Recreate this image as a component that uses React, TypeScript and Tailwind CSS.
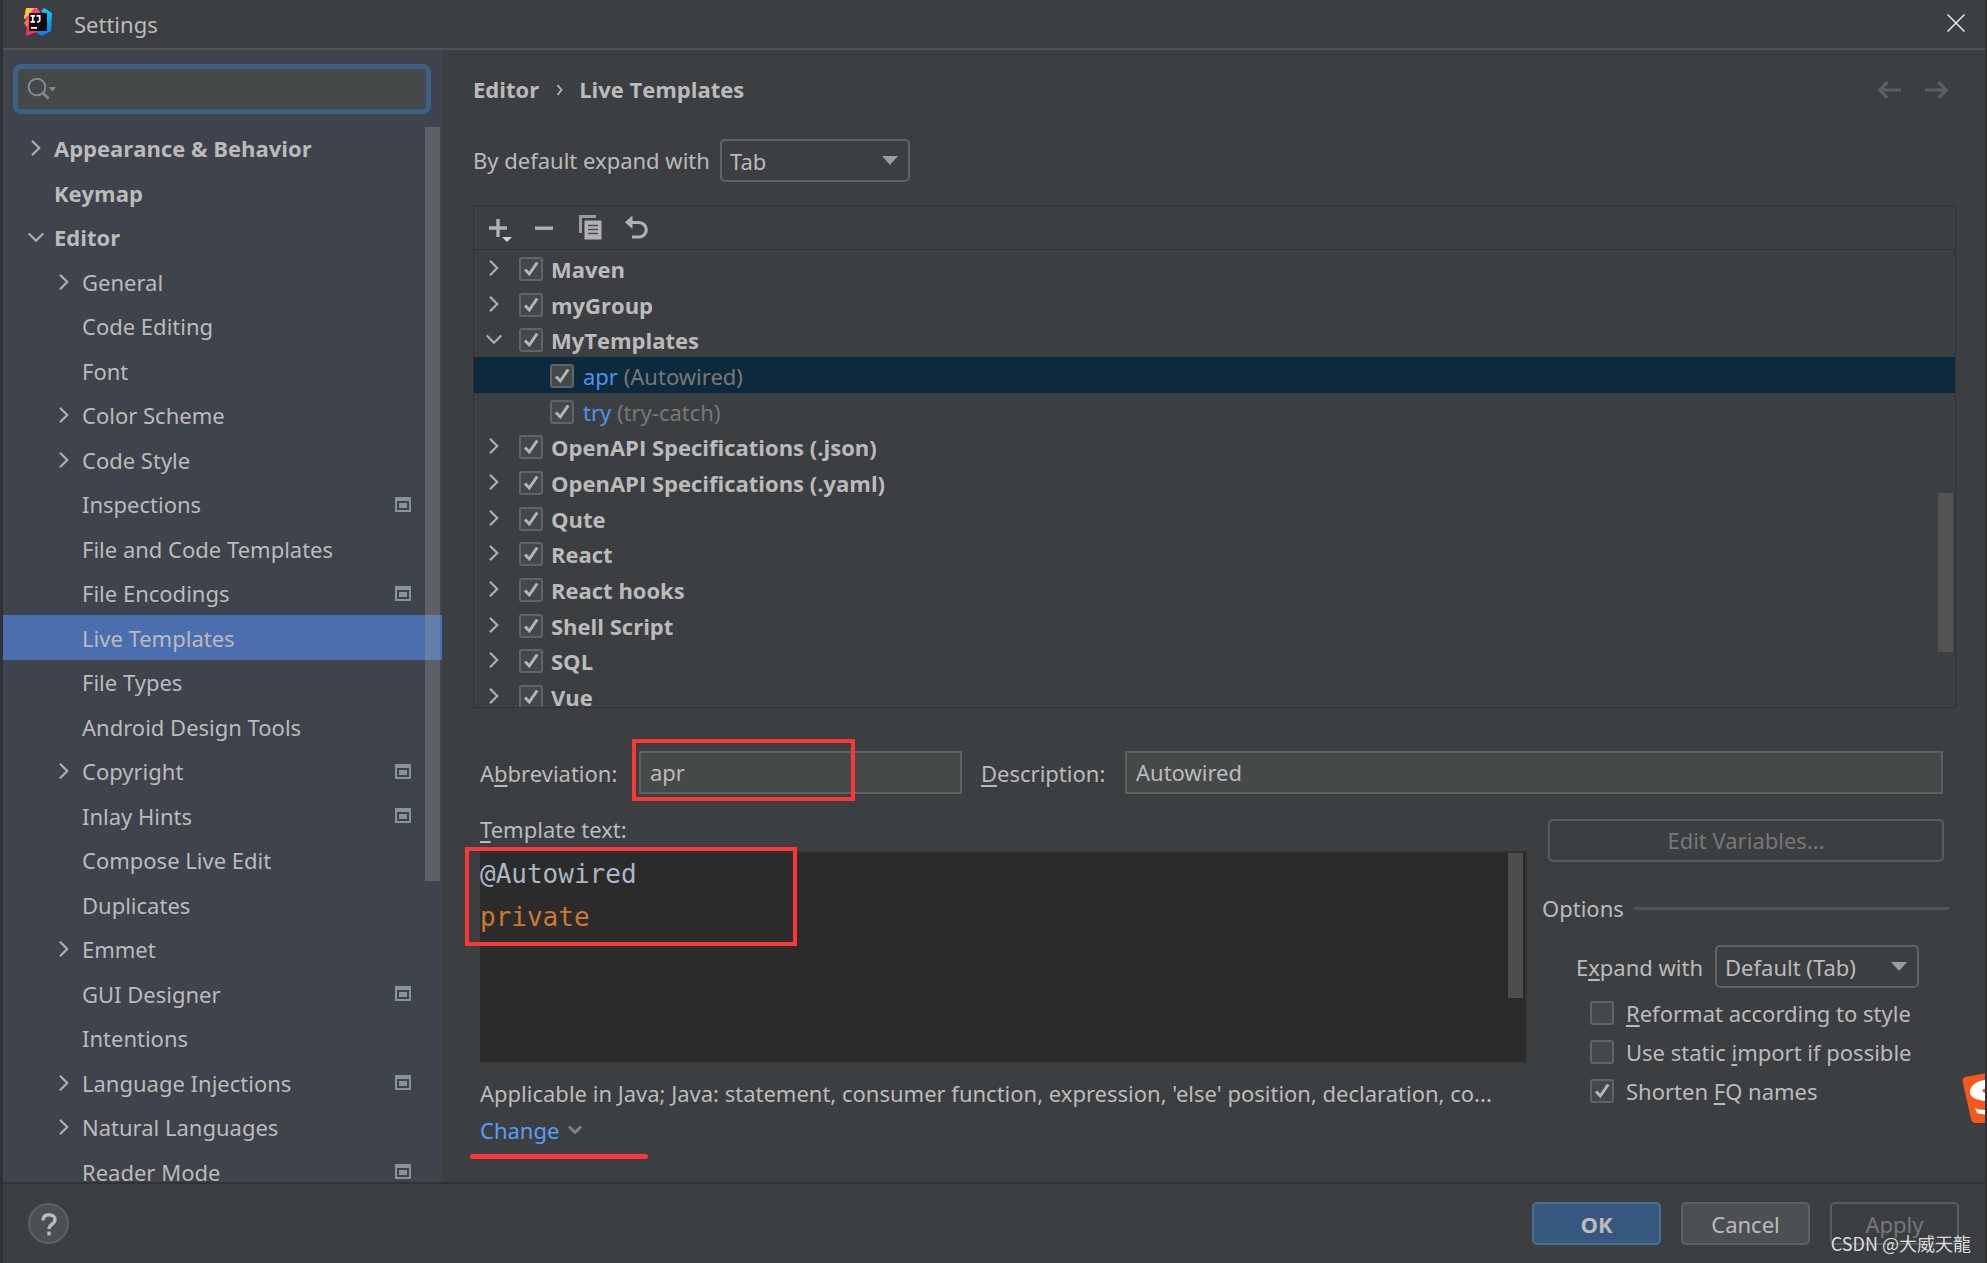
import { useState } from "react";

type NavItem = {
  label: string;
  level: number;
  state?: "open" | "closed";
  project?: boolean;
};

const navItems: NavItem[] = [
  { label: "Appearance & Behavior", level: 0, state: "closed" },
  { label: "Keymap", level: 0 },
  { label: "Editor", level: 0, state: "open" },
  { label: "General", level: 1, state: "closed" },
  { label: "Code Editing", level: 1 },
  { label: "Font", level: 1 },
  { label: "Color Scheme", level: 1, state: "closed" },
  { label: "Code Style", level: 1, state: "closed" },
  { label: "Inspections", level: 1, project: true },
  { label: "File and Code Templates", level: 1 },
  { label: "File Encodings", level: 1, project: true },
  { label: "Live Templates", level: 1 },
  { label: "File Types", level: 1 },
  { label: "Android Design Tools", level: 1 },
  { label: "Copyright", level: 1, state: "closed", project: true },
  { label: "Inlay Hints", level: 1, project: true },
  { label: "Compose Live Edit", level: 1 },
  { label: "Duplicates", level: 1 },
  { label: "Emmet", level: 1, state: "closed" },
  { label: "GUI Designer", level: 1, project: true },
  { label: "Intentions", level: 1 },
  { label: "Language Injections", level: 1, state: "closed", project: true },
  { label: "Natural Languages", level: 1, state: "closed" },
  { label: "Reader Mode", level: 1, project: true },
];

type TemplateRow = { name: string; description?: string; open?: boolean };

const templateRows: TemplateRow[] = [
  { name: "Maven" },
  { name: "myGroup" },
  { name: "MyTemplates", open: true },
  { name: "apr", description: "(Autowired)" },
  { name: "try", description: "(try-catch)" },
  { name: "OpenAPI Specifications (.json)" },
  { name: "OpenAPI Specifications (.yaml)" },
  { name: "Qute" },
  { name: "React" },
  { name: "React hooks" },
  { name: "Shell Script" },
  { name: "SQL" },
  { name: "Vue" },
];

function Chevron({ open }: { open?: boolean }) {
  return (
    <svg width="18" height="18" viewBox="0 0 18 18" fill="none" stroke="#adafb1" strokeWidth="2.2">
      {open ? <path d="M1.8 5.5 9 12.7l7.2-7.2" /> : <path d="M5 1.8 12.2 9 5 16.2" />}
    </svg>
  );
}

function ProjectIcon() {
  return (
    <svg width="16" height="15" viewBox="0 0 16 15" fill="none">
      <path d="M0 0h16v15H0z M2 4v9h12V4z" fill="#87939a" fillRule="evenodd" />
      <path d="M4 6h8v5H4z" fill="#87939a" />
    </svg>
  );
}

function IdeaLogo() {
  return (
    <svg width="30" height="30" viewBox="0 0 30 30">
      <defs>
        <linearGradient id="warm" x1="0" y1="0" x2="0.3" y2="1">
          <stop offset="0" stopColor="#fdd835" />
          <stop offset="0.5" stopColor="#fb7a4d" />
          <stop offset="0.8" stopColor="#fe2c6b" />
        </linearGradient>
        <linearGradient id="cool" x1="0" y1="0" x2="0" y2="1">
          <stop offset="0" stopColor="#13c9f5" />
          <stop offset="1" stopColor="#087cfa" />
        </linearGradient>
      </defs>
      <path d="M4 1 14 1 18 7 18 24 8 27 3 29 4 21 1 16 4 12 1 10z" fill="url(#warm)" />
      <path d="M10 1 15 2 18 7 8 10 4 14 1 11z" fill="#fe3d8b" />
      <path d="M3 1h8L6 8l-5 4z" fill="#fcc24a" />
      <path d="M18 4 21 1 29 6 28 24 19 29 13 25 23 22 23 8z" fill="url(#cool)" />
      <path d="M6 6h18v18H6z" fill="#150a10" />
      <path
        d="M7.5 8.8h4.5M9.8 8.8v6M7.5 14.8h4.5M13.5 8.8h3.2v4.4q0 1.8-2.6 1.6M8 20.8h6"
        stroke="#fff"
        strokeWidth="1.7"
        fill="none"
      />
    </svg>
  );
}

function Triangle() {
  return (
    <svg width="16" height="9" viewBox="0 0 16 9" className="pointer-events-none absolute right-3">
      <path d="M0 0h16L8 9z" fill="#9b9ea0" />
    </svg>
  );
}

function Check({ label, defaultChecked, id }: { label?: string; defaultChecked?: boolean; id?: string }) {
  return (
    <span className="relative flex size-6 shrink-0">
      <input
        type="checkbox"
        id={id}
        aria-label={label}
        defaultChecked={defaultChecked}
        className="peer size-6 appearance-none rounded-[3px] border-2 border-[#616364] bg-[#43494a]"
      />
      <svg
        width="24"
        height="24"
        viewBox="0 0 24 24"
        fill="none"
        stroke="#b4b6b7"
        strokeWidth="3"
        className="pointer-events-none absolute inset-0 hidden peer-checked:block"
      >
        <path d="M6 12.5 10.3 17 18.2 5.5" />
      </svg>
    </span>
  );
}

function Mnemonic({ children }: { children: string }) {
  return <span className="underline decoration-2 underline-offset-[3px]">{children}</span>;
}

function Sidebar() {
  const [selected, setSelected] = useState("Live Templates");
  return (
    <aside className="relative flex w-[439px] shrink-0 flex-col bg-[#3e434c]">
      <div className="relative mr-[11px] ml-[10px] mt-[14px] flex h-[50px] items-center rounded-lg bg-[#3d6185] p-[5px]">
        <input
          type="text"
          aria-label="Search settings"
          className="h-full w-full rounded-[3px] bg-[#45494a] pl-11 text-[#bbbbbb] outline-none"
        />
        <svg
          width="30"
          height="24"
          viewBox="0 0 30 24"
          fill="none"
          stroke="#7f8b91"
          className="pointer-events-none absolute left-[14px]"
        >
          <circle cx="10" cy="10" r="8.3" strokeWidth="2" />
          <path d="m15.5 15.5 6 6" strokeWidth="2.6" />
          <path d="M21.5 10h7.5l-3.7 4.5z" fill="#7f8b91" stroke="none" />
        </svg>
      </div>
      <nav className="mt-3 min-h-0 flex-1 overflow-hidden">
        {navItems.map((item) => (
          <button
            key={item.label}
            type="button"
            onClick={() => setSelected(item.label)}
            className={`flex w-full items-center pr-[31px] text-left odd:h-[44px] even:h-[45px] ${
              item.level === 0 ? "pl-6 font-['Open_Sans',sans-serif] font-bold" : "pl-[52px]"
            } ${selected === item.label ? "bg-[#4b6eaf]" : ""}`}
          >
            <span className="mr-[9px] flex w-[18px] justify-center">
              {item.state && <Chevron open={item.state === "open"} />}
            </span>
            <span className="flex-1 whitespace-nowrap">{item.label}</span>
            {item.project && <ProjectIcon />}
          </button>
        ))}
      </nav>
      <div className="absolute top-[77px] right-[2px] h-[754px] w-[15px] bg-[#a6a6a6]/30" />
    </aside>
  );
}

function Toolbar() {
  return (
    <div className="flex h-[44px] shrink-0 items-center gap-5 border-b border-[#323232] pl-[14px]">
      <button type="button" aria-label="Add">
        <svg width="26" height="28" viewBox="0 0 26 28" fill="none">
          <path d="M1 14h18M10 5v18" stroke="#afb1b3" strokeWidth="3.4" />
          <path d="M14 23h10l-5 5z" fill="#d0d2d3" />
        </svg>
      </button>
      <button type="button" aria-label="Remove">
        <svg width="24" height="28" viewBox="0 0 24 28">
          <path d="M1 12.5h18v3.4H1z" fill="#afb1b3" />
        </svg>
      </button>
      <button type="button" aria-label="Duplicate">
        <svg width="26" height="28" viewBox="0 0 26 28" fill="none">
          <path d="M1 1h17v3H4v15H1z" fill="#9a9da0" />
          <path d="M6.500 6.500h17v19h-17z" fill="#afb1b3" />
          <path d="M10 11.500h10M10 15.500h10M10 19.500h10" stroke="#4a4d4f" strokeWidth="1.600" />
        </svg>
      </button>
      <button type="button" aria-label="Restore defaults">
        <svg width="26" height="28" viewBox="0 0 26 28" fill="none">
          <path d="M6 8.500h9a7 7 0 0 1 0 14.500H8" stroke="#afb1b3" strokeWidth="3.200" />
          <path d="M8.500 1.500v13.500L1 8.300z" fill="#afb1b3" />
        </svg>
      </button>
    </div>
  );
}

function TemplateTree() {
  const [selected, setSelected] = useState("apr");
  return (
    <div className="relative mt-[23px] flex min-h-0 flex-1 flex-col border border-[#323232]">
      <Toolbar />
      <ul className="min-h-0 flex-1 overflow-hidden">
        {templateRows.map((row) => (
          <li
            key={row.name}
            onClick={() => setSelected(row.name)}
            className={`flex h-9 items-center pt-px pl-[11px] [&:nth-child(3n)]:h-[35px] ${
              selected === row.name ? "bg-[#0d293e]" : ""
            }`}
          >
            {row.description ? (
              <>
                <span className="w-[65px]" />
                <Check label={row.name} defaultChecked />
                <span className="ml-[9px] whitespace-pre text-[#787878]">
                  <span className="text-[#4f93ee]">{row.name}</span> {row.description}
                </span>
              </>
            ) : (
              <>
                <span className="mb-[2px] w-[34px]">
                  <Chevron open={row.open} />
                </span>
                <Check label={row.name} defaultChecked />
                <span className="ml-[8px] font-['Open_Sans',sans-serif] font-bold">{row.name}</span>
              </>
            )}
          </li>
        ))}
      </ul>
      <div className="absolute top-[287px] right-[2px] h-[159px] w-[15px] bg-[#515355]" />
    </div>
  );
}

function Options() {
  return (
    <div className="mr-[7px] w-[407px] shrink-0 pt-[25px]">
      <div className="pr-[5px] pl-[6px]">
        <button
          type="button"
          disabled
          className="h-[43px] w-full rounded-[5px] border-2 border-[#5a5c5e] pb-[2px] text-[#777777]"
        >
          Edit Variables...
        </button>
      </div>
      <div className="mt-[30px] flex h-8 items-center gap-[10px]">
        <span>Options</span>
        <span className="h-[3px] flex-1 bg-[#515355]" />
      </div>
      <div className="mt-[21px] flex items-center justify-end gap-3 pr-[30px]">
        <label htmlFor="expand-with">
          E<Mnemonic>x</Mnemonic>pand with
        </label>
        <div className="relative flex w-[204px] items-center">
          <select
            id="expand-with"
            className="h-[43px] w-full appearance-none rounded-[5px] border-2 border-[#616365] bg-[#3c3f41] pl-[8px]"
          >
            <option>Default (Tab)</option>
          </select>
          <Triangle />
        </div>
      </div>
      <div className="mt-[5px] flex flex-col pl-[48px]">
        <div className="flex h-[39px] items-center gap-3">
          <Check id="reformat" />
          <label htmlFor="reformat">
            <Mnemonic>R</Mnemonic>eformat according to style
          </label>
        </div>
        <div className="flex h-[39px] items-center gap-3">
          <Check id="static-import" />
          <label htmlFor="static-import">
            Use static <Mnemonic>i</Mnemonic>mport if possible
          </label>
        </div>
        <div className="flex h-[39px] items-center gap-3">
          <Check id="shorten" defaultChecked />
          <label htmlFor="shorten">
            Shorten <Mnemonic>F</Mnemonic>Q names
          </label>
        </div>
      </div>
    </div>
  );
}

function TemplateForm() {
  return (
    <div className="mt-[43px] shrink-0 pb-[31px] pl-[7px]">
      <div className="flex items-center pr-[13px]">
        <label htmlFor="abbreviation" className="w-[159px]">
          A<Mnemonic>b</Mnemonic>breviation:
        </label>
        <div className="relative">
          <input
            id="abbreviation"
            type="text"
            defaultValue="apr"
            className="block h-[43px] w-[323px] border-2 border-[#5e6062] bg-[#45494a] pb-[2px] pl-[9px]"
          />
          {/* Red marker around the abbreviation */}
          <div className="pointer-events-none absolute -top-3 -left-[7px] h-[62px] w-[223px] border-4 border-[#fb3737]" />
        </div>
        <label htmlFor="description" className="ml-[19px] w-[144px]">
          <Mnemonic>D</Mnemonic>escription:
        </label>
        <input
          id="description"
          type="text"
          defaultValue="Autowired"
          className="h-[43px] min-w-0 flex-1 border-2 border-[#5e6062] bg-[#45494a] pb-[2px] pl-[9px]"
        />
      </div>

      <div className="flex gap-[15px]">
        <div className="min-w-0 flex-1 pt-[19px]">
          <div className="flex h-8 items-center">
            <span>
              <Mnemonic>T</Mnemonic>emplate text:
            </span>
          </div>
          <div className="relative mt-[6px] h-[212px] border-2 border-l-0 border-[#323232] bg-[#2b2b2b] font-['DejaVu_Sans_Mono',monospace] text-[26px] leading-[43px]">
            <div className="text-[#a9b7c6]">@Autowired</div>
            <div className="text-[#cc7832]">private</div>
            <div className="absolute top-0 right-[2px] h-[145px] w-[15px] bg-[#4d4d4d]" />
            {/* Red marker around the template body */}
            <div className="pointer-events-none absolute -top-[6px] -left-[15px] h-[99px] w-[332px] border-4 border-[#fb3737]" />
          </div>
          <p className="mt-3 truncate leading-9">
            Applicable in Java; Java: statement, consumer function, expression, 'else' position, declaration, co...
          </p>
          <div className="relative flex h-10 items-center pb-[2px]">
            <a href="#change" className="flex items-center gap-[9px] text-[#589df6]">
              Change
              <svg width="14" height="10" viewBox="0 0 14 10" fill="none" stroke="#7f8486" strokeWidth="3">
                <path d="m1 1.500 6 6 6-6" />
              </svg>
            </a>
            <div className="absolute -bottom-2 -left-[10px] h-[5px] w-[178px] rounded-full bg-[#fb3737]" />
          </div>
        </div>
        <Options />
      </div>
    </div>
  );
}

export default function App() {
  return (
    <div className="relative flex h-screen flex-col overflow-hidden border-r-2 border-l-[3px] border-[#2f3132] bg-[#3c3f41] font-['Noto_Sans','Noto_Sans_CJK_SC',sans-serif] text-[22px] leading-8 text-[#bbbbbb]">
      <header className="flex h-[50px] shrink-0 items-center border-b-2 border-[#505254] pr-5 pl-[20px]">
        <div className="mb-1">
          <IdeaLogo />
        </div>
        <h1 className="ml-[21px] flex-1">Settings</h1>
        <button type="button" aria-label="Close" className="mb-[2px]">
          <svg width="18" height="18" viewBox="0 0 18 18" stroke="#e8e8e8" strokeWidth="1.500">
            <path d="m0.500 0.500 17 17M17.500 0.500l-17 17" />
          </svg>
        </button>
      </header>

      <div className="flex min-h-0 flex-1">
        <Sidebar />
        <main className="flex min-w-0 flex-1 flex-col pr-[29px] pl-[31px]">
          <div className="mt-5 flex h-10 items-center font-['Open_Sans',sans-serif] font-bold">
            <span className="pb-[2px]">Editor</span>
            <svg width="8" height="12" viewBox="0 0 8 12" fill="none" stroke="#adafb1" strokeWidth="2" className="mr-[15px] ml-[17px]">
              <path d="m1.500 1 4 5-4 5" />
            </svg>
            <span className="flex-1 pb-[2px]">Live Templates</span>
            <div className="mr-[7px] flex gap-6">
              <button type="button" aria-label="Back" disabled>
                <svg width="24" height="18" viewBox="0 0 24 18" fill="none" stroke="#5c5e5f" strokeWidth="3.200">
                  <path d="M24 9H3M10.500 1.200 2.700 9l7.800 7.800" />
                </svg>
              </button>
              <button type="button" aria-label="Forward" disabled>
                <svg width="24" height="18" viewBox="0 0 24 18" fill="none" stroke="#5c5e5f" strokeWidth="3.200">
                  <path d="M0 9h21M13.500 1.200 21.300 9l-7.800 7.800" />
                </svg>
              </button>
            </div>
          </div>

          <div className="mt-[29px] flex items-center">
            <label htmlFor="default-expand" className="w-[247px] pb-[2px]">
              By default expand with
            </label>
            <div className="relative flex w-[190px] items-center">
              <select
                id="default-expand"
                className="h-[43px] w-full appearance-none rounded-[5px] border-2 border-[#616365] bg-[#3c3f41] pl-[8px]"
              >
                <option>Tab</option>
              </select>
              <Triangle />
            </div>
          </div>

          <TemplateTree />
          <TemplateForm />
        </main>
      </div>

      <footer className="flex h-[81px] shrink-0 items-center gap-5 border-t-2 border-[#323232] pr-[26px] pl-[25px]">
        <button
          type="button"
          aria-label="Help"
          className="flex size-[41px] items-center justify-center rounded-full border-2 border-[#5e6062] bg-[#4c5052]"
        >
          <svg width="16" height="24" viewBox="0 0 16 24" fill="none" stroke="#b8babb" strokeWidth="3.400">
            <path d="M2 8.500C2 4.500 4.500 2.700 8 2.700s6 2 6 5c0 4.500-6 4.300-6 9.300" />
            <path d="M8 19.500v4" />
          </svg>
        </button>
        <span className="flex-1" />
        <button
          type="button"
          className="h-[43px] w-[129px] rounded-[5px] border-2 border-[#4c708c] bg-[#365880] font-['Open_Sans',sans-serif] font-bold"
        >
          OK
        </button>
        <button type="button" className="h-[43px] w-[129px] rounded-[5px] border-2 border-[#5e6062] bg-[#4c5052]">
          Cancel
        </button>
        <button type="button" disabled className="h-[43px] w-[129px] rounded-[5px] border-2 border-[#5a5c5e] text-[#777777]">
          Apply
        </button>
      </footer>

      {/* Input method badge peeking in from the screen edge */}
      <svg width="24" height="52" viewBox="0 0 24 52" className="absolute -right-px bottom-[139px]">
        <path d="M24 1 3 5Q0 6 .5 9L9 47q1 4 5 4h10z" fill="#f4581c" />
        <path d="M24 8C14 9 8 14 8 20c0 6 7 8 16 9v-8c-4-1-5-3-2-4l2-.5z" fill="#fff" />
        <path d="M13 36c3 1.500 7 2 11 2v4.500c-4 0-7-.5-9-1.500z" fill="#fff" />
      </svg>

      <div className="absolute right-[14px] bottom-1 font-['Noto_Sans_CJK_SC',sans-serif] text-[18px] leading-8 text-[#dcdcdc]">
        CSDN @大威天龍
      </div>
    </div>
  );
}
